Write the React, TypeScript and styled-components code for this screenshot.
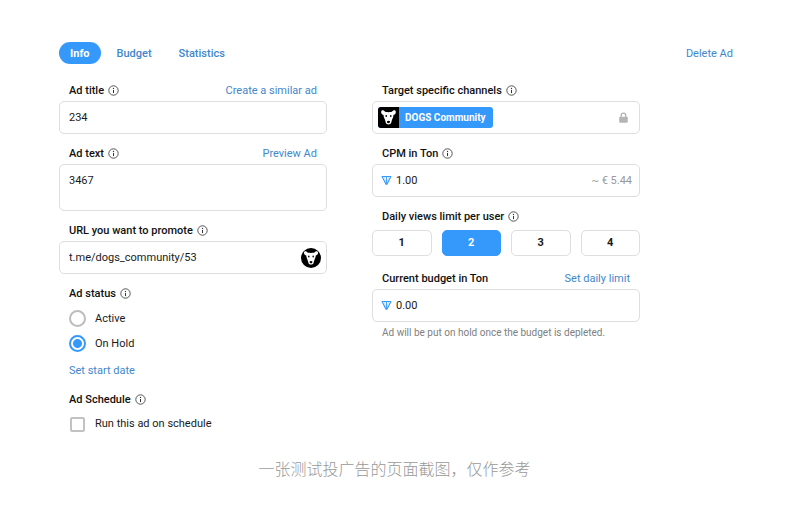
import React from "react";
import styled, { createGlobalStyle, css } from "styled-components";

const blue = "#3598fb";
const linkBlue = "#3f87cc";

const GlobalStyle = createGlobalStyle`
  *, *::before, *::after { box-sizing: border-box; }
  body {
    margin: 0;
    background: #fff;
    color: #1a1a1a;
    font-family: Roboto, "Noto Sans CJK SC", sans-serif;
    font-size: 11px;
    line-height: 16px;
  }
  button, input, textarea { font: inherit; color: inherit; }
`;

const Page = styled.main`
  padding: 42px 41px 24px 59px;
`;

const Header = styled.header`
  display: flex;
  align-items: center;
  justify-content: space-between;
  padding-right: 12px;
`;

const Tabs = styled.nav`
  display: flex;
  gap: 5px;
`;

const Tab = styled.button<{ $active?: boolean }>`
  height: 22px;
  padding: 2px 11px 0;
  border: 0;
  border-radius: 11px;
  background: ${(p) => (p.$active ? blue : "transparent")};
  color: ${(p) => (p.$active ? "#fff" : linkBlue)};
  font-weight: ${(p) => (p.$active ? 700 : 500)};
  cursor: pointer;
`;

const Link = styled.a`
  color: ${linkBlue};
  text-decoration: none;
`;

const DeleteLink = styled(Link)`
  padding-top: 2px;
`;

const Form = styled.form`
  display: grid;
  grid-template-columns: 1fr 1fr;
  gap: 45px;
  align-items: start;
  margin-top: 18px;
  padding-right: 105px;
`;

const Column = styled.div`
  display: flex;
  flex-direction: column;
  gap: 11px;
  min-width: 0;
`;

const Field = styled.div`
  display: flex;
  flex-direction: column;
  gap: 1px;
`;

const LabelRow = styled.div`
  display: flex;
  align-items: center;
  gap: 4px;
  padding: 0 10px;
  line-height: 18px;

  svg {
    margin-bottom: 1px;
  }

  ${Link} {
    margin-left: auto;
  }
`;

const labelStyle = css`
  font-weight: 500;
  color: #111;
`;

const Label = styled.label`
  ${labelStyle}
`;

const GroupLabel = styled.span`
  ${labelStyle}
`;

const boxStyle = css`
  border: 1px solid #dedede;
  border-radius: 5px;
  background: #fff;
`;

const InputBox = styled.div`
  ${boxStyle}
  display: flex;
  align-items: center;
  gap: 4px;
  height: 33px;
  padding: 0 5px 0 9px;
`;

const AmountBox = styled(InputBox)`
  padding: 0 7px 0 8px;
`;

const ChannelBox = styled(InputBox)`
  justify-content: space-between;
  padding: 0 10px 0 5px;
`;

const TextInput = styled.input`
  flex: 1;
  min-width: 0;
  padding: 0;
  border: 0;
  outline: 0;
  background: transparent;
`;

const TextArea = styled.textarea`
  ${boxStyle}
  display: block;
  width: 100%;
  height: 47px;
  padding: 8px 9px;
  outline: 0;
  resize: none;
`;

const Suffix = styled.span`
  color: #999;
`;

const Channel = styled.span`
  display: flex;
  align-items: center;
  height: 21px;
  padding-right: 7px;
  gap: 6px;
  overflow: hidden;
  border-radius: 3px;
  background: ${blue};
  color: #fff;
  font-size: 10px;
  font-weight: 700;
`;

const Choices = styled.fieldset`
  display: flex;
  flex-direction: column;
  gap: 4px;
  margin: 0 0 3px;
  padding: 0;
  border: 0;
`;

const LimitRow = styled.div`
  display: grid;
  grid-template-columns: repeat(4, 1fr);
  gap: 10px;
`;

const LimitButton = styled.button<{ $active?: boolean }>`
  ${boxStyle}
  height: 26px;
  padding: 0;
  font-weight: 700;
  cursor: pointer;
  ${(p) =>
    p.$active &&
    css`
      background: ${blue};
      border-color: ${blue};
      color: #fff;
    `}
`;

const OptionList = styled.div`
  display: flex;
  flex-direction: column;
  gap: 8px;
  padding: 6px 10px 0;
`;

const Option = styled.label`
  display: flex;
  align-items: center;
  gap: 9px;
`;

const Radio = styled.input.attrs({ type: "radio" })`
  appearance: none;
  width: 17px;
  height: 17px;
  margin: 0;
  border: 2px solid #bdbdbd;
  border-radius: 50%;

  &:checked {
    border-color: ${blue};
    background: radial-gradient(circle, ${blue} 4px, #fff 5px);
  }
`;

const Checkbox = styled.input.attrs({ type: "checkbox" })`
  appearance: none;
  width: 15px;
  height: 15px;
  margin: 0 1px;
  border: 2px solid #c2c2c2;
  border-radius: 2px;

  &:checked {
    border-color: ${blue};
    background: ${blue};
  }
`;

const StartDate = styled.div`
  padding: 0 10px 1px;
`;

const Hint = styled.p`
  margin: 0;
  padding: 2px 10px 0;
  color: #808080;
  font-size: 10px;
`;

const Caption = styled.p`
  margin: 24px 0 0;
  padding-right: 15px;
  color: #999;
  font-family: "Noto Sans CJK SC", sans-serif;
  font-size: 16px;
  font-weight: 300;
  line-height: 24px;
  text-align: center;
`;

const InfoIcon = () => (
  <svg width="11" height="11" viewBox="0 0 11 11" fill="none" aria-hidden="true">
    <circle cx="5.5" cy="5.5" r="4.7" stroke="#444" strokeWidth="0.9" />
    <circle cx="5.5" cy="3.4" r="0.65" fill="#333" />
    <path d="M5.5 4.9v3.2" stroke="#333" strokeWidth="1" />
  </svg>
);

const TonIcon = () => (
  <svg width="11" height="11" viewBox="0 0 11 11" fill="none" stroke={blue} strokeLinejoin="round" aria-hidden="true">
    <path d="M5.5 1.5v7.2" strokeWidth="0.9" />
    <path d="M3.2 1.6l2.3 7 2.3-7" strokeWidth="0.3" />
    <path d="M1.1 1.5h8.8L6 9.2Q5.5 9.8 5 9.2z" strokeWidth="1.1" />
  </svg>
);

const LockIcon = () => (
  <svg width="11" height="12" viewBox="0 0 11 12" aria-hidden="true">
    <rect x="1.2" y="4.8" width="8.6" height="6" rx="1" fill="#b5b5b5" />
    <path d="M3.2 5V3.4a2.3 2.3 0 0 1 4.6 0V5" fill="none" stroke="#b5b5b5" strokeWidth="1.3" />
  </svg>
);

const DogLogo = ({ round }: { round?: boolean }) => (
  <svg
    width={round ? 20 : 21}
    height={round ? 20 : 21}
    viewBox="0 0 21 21"
    aria-hidden="true"
  >
    {round ? <circle cx="10.5" cy="10.5" r="10.5" fill="#000" /> : <rect width="21" height="21" fill="#000" />}
    <path
      d="M3.2 4.4C3.4 3.3 4.8 3 5.7 3.6C6.5 4.1 6.9 4.9 7.8 5C9.5 5.2 11.5 5.2 13.2 5C14.1 4.9 14.5 4.1 15.3 3.6C16.2 3 17.6 3.3 17.8 4.4C18.1 5.9 17.2 7.5 15.5 7.9C15.4 9.5 15 10.7 14.3 12C13.7 13.2 13.6 14.7 13.1 16C12.6 17.9 8.4 17.9 7.9 16C7.4 14.7 7.3 13.2 6.7 12C6 10.7 5.6 9.5 5.5 7.9C3.8 7.5 2.9 5.9 3.2 4.4Z"
      fill="#fff"
    />
    <ellipse cx="8.2" cy="9" rx="0.8" ry="1" fill="#000" />
    <ellipse cx="12.8" cy="9" rx="0.8" ry="1" fill="#000" />
    <path d="M8.9 14.2q1.6-.9 3.2 0 0 1.8-1.6 2-1.6-.2-1.6-2z" fill="#000" />
  </svg>
);

export default function App() {
  const [limit, setLimit] = React.useState(2);
  const [tab, setTab] = React.useState("Info");

  return (
    <>
      <GlobalStyle />
      <Page>
        <Header>
          <Tabs>
            {["Info", "Budget", "Statistics"].map((name) => (
              <Tab key={name} $active={name === tab} onClick={() => setTab(name)}>
                {name}
              </Tab>
            ))}
          </Tabs>
          <DeleteLink href="#delete">Delete Ad</DeleteLink>
        </Header>

        <Form>
          <Column>
            <Field>
              <LabelRow>
                <Label htmlFor="title">Ad title</Label>
                <InfoIcon />
                <Link href="#similar">Create a similar ad</Link>
              </LabelRow>
              <InputBox>
                <TextInput id="title" defaultValue="234" />
              </InputBox>
            </Field>

            <Field>
              <LabelRow>
                <Label htmlFor="text">Ad text</Label>
                <InfoIcon />
                <Link href="#preview">Preview Ad</Link>
              </LabelRow>
              <TextArea id="text" defaultValue="3467" />
            </Field>

            <Field>
              <LabelRow>
                <Label htmlFor="url">URL you want to promote</Label>
                <InfoIcon />
              </LabelRow>
              <InputBox>
                <TextInput id="url" defaultValue="t.me/dogs_community/53" />
                <DogLogo round />
              </InputBox>
            </Field>

            <Field role="radiogroup" aria-labelledby="status">
              <LabelRow>
                <GroupLabel id="status">Ad status</GroupLabel>
                <InfoIcon />
              </LabelRow>
              <OptionList>
                <Option>
                  <Radio name="status" />
                  Active
                </Option>
                <Option>
                  <Radio name="status" defaultChecked />
                  On Hold
                </Option>
              </OptionList>
            </Field>

            <StartDate>
              <Link href="#start">Set start date</Link>
            </StartDate>

            <Field role="group" aria-labelledby="schedule">
              <LabelRow>
                <GroupLabel id="schedule">Ad Schedule</GroupLabel>
                <InfoIcon />
              </LabelRow>
              <OptionList>
                <Option>
                  <Checkbox />
                  Run this ad on schedule
                </Option>
              </OptionList>
            </Field>
          </Column>

          <Column>
            <Field>
              <LabelRow>
                <GroupLabel>Target specific channels</GroupLabel>
                <InfoIcon />
              </LabelRow>
              <ChannelBox>
                <Channel>
                  <DogLogo />
                  DOGS Community
                </Channel>
                <LockIcon />
              </ChannelBox>
            </Field>

            <Field>
              <LabelRow>
                <Label htmlFor="cpm">CPM in Ton</Label>
                <InfoIcon />
              </LabelRow>
              <AmountBox>
                <TonIcon />
                <TextInput id="cpm" defaultValue="1.00" />
                <Suffix>~ € 5.44</Suffix>
              </AmountBox>
            </Field>

            <Choices aria-labelledby="limit">
              <LabelRow>
                <GroupLabel id="limit">Daily views limit per user</GroupLabel>
                <InfoIcon />
              </LabelRow>
              <LimitRow>
                {[1, 2, 3, 4].map((n) => (
                  <LimitButton
                    key={n}
                    type="button"
                    $active={n === limit}
                    aria-pressed={n === limit}
                    onClick={() => setLimit(n)}
                  >
                    {n}
                  </LimitButton>
                ))}
              </LimitRow>
            </Choices>

            <Field>
              <LabelRow>
                <Label htmlFor="budget">Current budget in Ton</Label>
                <Link href="#daily">Set daily limit</Link>
              </LabelRow>
              <AmountBox>
                <TonIcon />
                <TextInput id="budget" defaultValue="0.00" />
              </AmountBox>
              <Hint>Ad will be put on hold once the budget is depleted.</Hint>
            </Field>
          </Column>
        </Form>

        <Caption>一张测试投广告的页面截图，仅作参考</Caption>
      </Page>
    </>
  );
}
